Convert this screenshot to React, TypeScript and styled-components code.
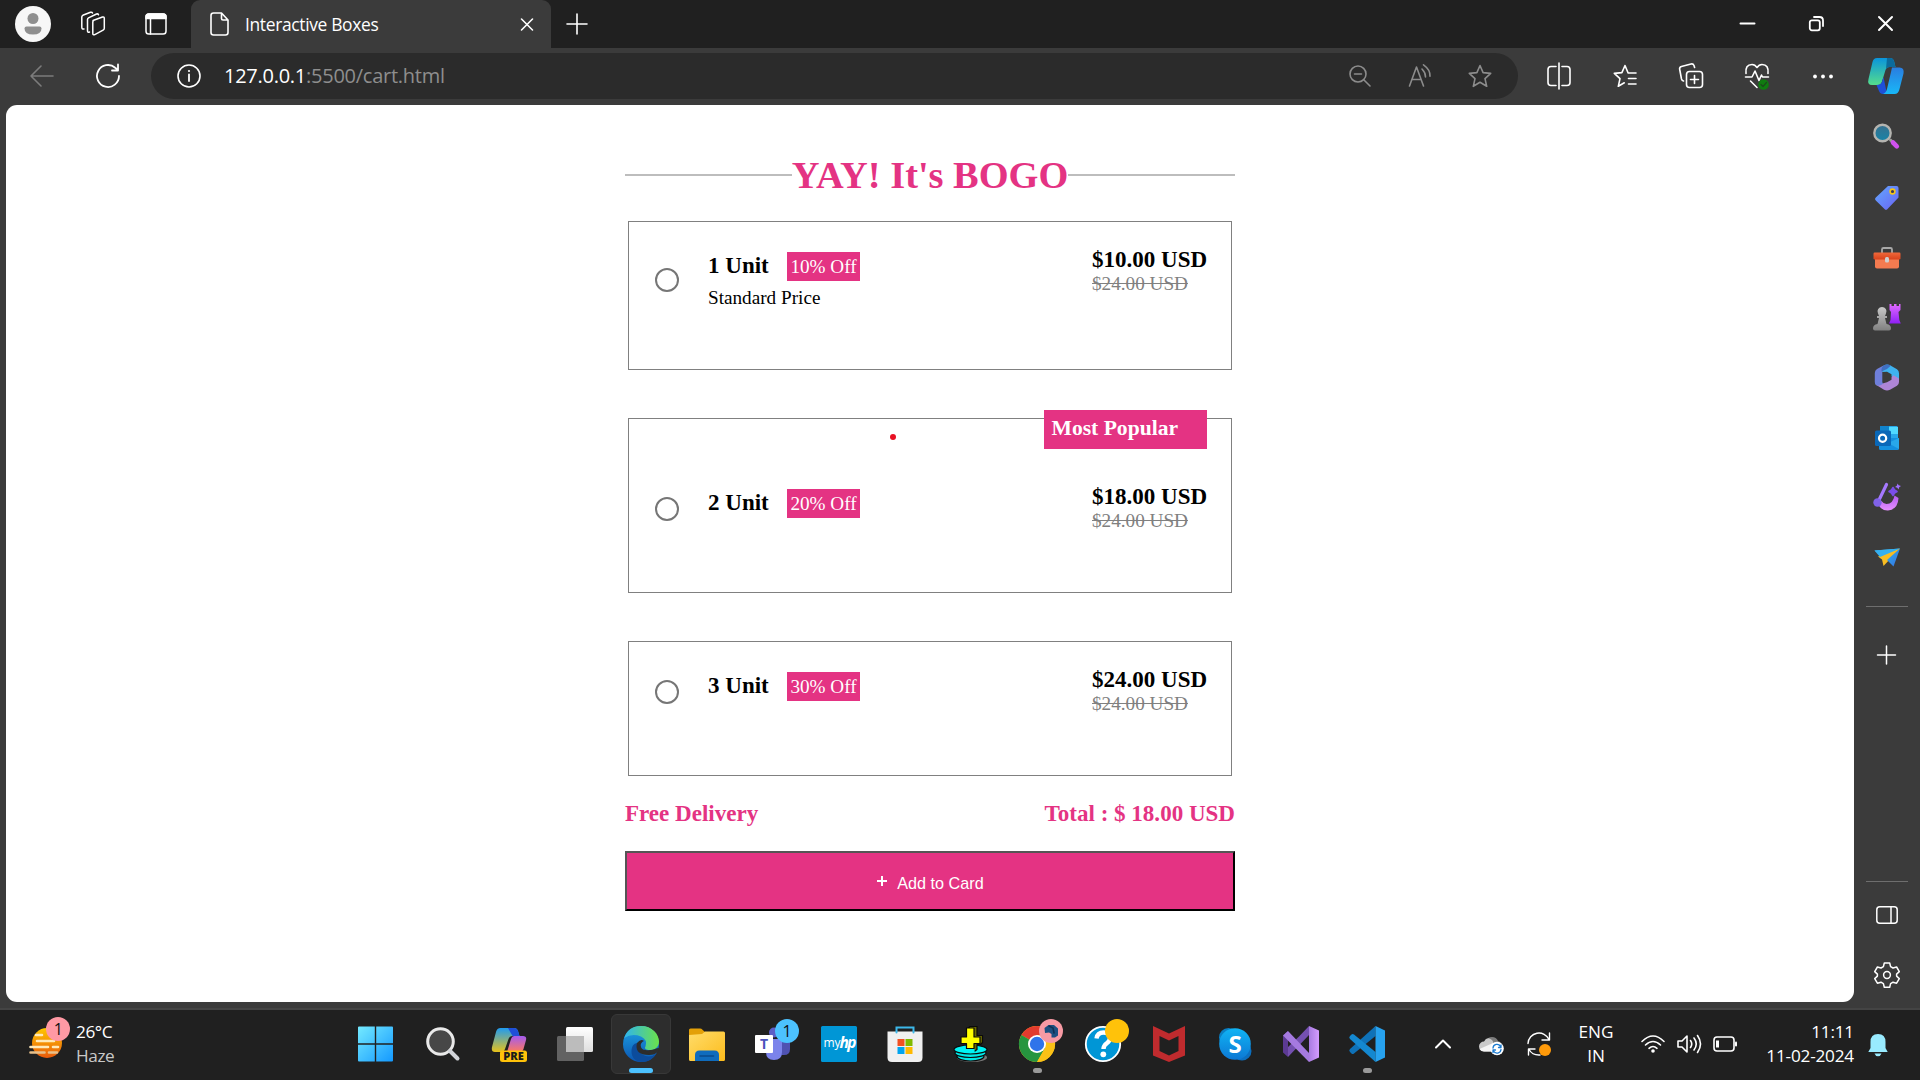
import React from "react";
import styled, { createGlobalStyle } from "styled-components";

const UI = `"Open Sans", "Noto Sans", sans-serif`;
const SERIF = `"Liberation Serif", "Times New Roman", serif`;
const PINK = "#e43383";

const GlobalStyle = createGlobalStyle`
  * { box-sizing: border-box; }
  body { margin: 0; background: #3b3b3b; overflow: hidden; }
`;

const Desktop = styled.div`
  width: 1920px;
  height: 1080px;
  display: flex;
  flex-direction: column;
  background: #3b3b3b;
  font-family: ${UI};
  color: #fff;
`;

/* ---------- shared ---------- */
const Slot = styled.div<{ $w: number; $h?: number; $lift?: number }>`
  position: relative;
  flex: none;
  width: ${(p) => p.$w}px;
  height: ${(p) => (p.$h ? `${p.$h}px` : "100%")};
  padding-bottom: ${(p) => p.$lift ?? 0}px;
  display: flex;
  align-items: center;
  justify-content: center;
`;

const Glyph = styled.svg`
  display: block;
  flex: none;
  overflow: visible;
  fill: none;
  stroke-linecap: round;
  stroke-linejoin: round;
`;

type IconProps = { w: number; h?: number; stroke?: string; sw?: number; children: React.ReactNode };
const Icon = ({ w, h = w, stroke = "none", sw = 1.6, children }: IconProps) => (
  <Glyph width={w} height={h} viewBox={`0 0 ${w} ${h}`} stroke={stroke} strokeWidth={sw}>
    {children}
  </Glyph>
);

/* ---------- title bar ---------- */
const TitleBar = styled.header`
  height: 48px;
  flex: none;
  display: flex;
  align-items: center;
  background: #202020;
`;
const Avatar = styled.div`
  width: 36px;
  height: 36px;
  border-radius: 50%;
  background: #f7f7f7;
  display: flex;
  align-items: center;
  justify-content: center;
`;
const Tab = styled.div`
  width: 360px;
  height: 48px;
  padding: 0 18px 0 19px;
  display: flex;
  align-items: center;
  border-radius: 9px 9px 0 0;
  background: #3b3b3b;
`;
const TabTitle = styled.span`
  margin: 0 auto 0 16px;
  font-size: 17.4px;
  line-height: 24px;
  letter-spacing: -0.33px;
  white-space: nowrap;
`;
const WindowControls = styled.div`
  display: flex;
  height: 48px;
  margin-left: auto;
`;

/* ---------- toolbar ---------- */
const Toolbar = styled.div`
  height: 57px;
  flex: none;
  display: flex;
  align-items: center;
  padding-bottom: 1px;
`;
const AddressBar = styled.div`
  width: 1367px;
  height: 46px;
  margin: 0 8px 0 19px;
  padding: 0 8px 0 26px;
  border-radius: 23px;
  background: #2b2b2b;
  display: flex;
  align-items: center;
`;
const Url = styled.span`
  margin: 0 auto 0 23px;
  font-size: 20px;
  line-height: 28px;
  letter-spacing: -0.26px;
  color: #8e8e8e;
  white-space: nowrap;
  b { font-weight: 400; color: #fff; }
`;

/* ---------- body ---------- */
const Body = styled.div`
  height: 905px;
  flex: none;
  display: flex;
  padding-left: 6px;
  border-bottom: 2px solid #444;
`;
const Page = styled.main`
  width: 1848px;
  height: 897px;
  border-radius: 11px;
  background: #fff;
  display: flex;
  justify-content: center;
  font-family: ${SERIF};
  color: #000;
`;
const Sidebar = styled.aside`
  width: 66px;
  padding: 2px 0 3px;
  display: flex;
  flex-direction: column;
  align-items: center;
`;
const SideRule = styled.div<{ $top: string; $bottom: number }>`
  width: 42px;
  height: 1px;
  flex: none;
  margin: ${(p) => p.$top} 0 ${(p) => p.$bottom}px;
  background: #6e6e6e;
`;

/* ---------- cart ---------- */
const Cart = styled.section`
  width: 610px;
  padding-top: 48px;
  display: flex;
  flex-direction: column;
`;
const HeadingRow = styled.div`
  height: 44px;
  display: flex;
  align-items: center;
  &::before, &::after { content: ""; flex: 1; height: 2px; background: #bdbdbd; }
`;
const Heading = styled.h1`
  margin: 0;
  font-size: 38.4px;
  line-height: 44px;
  color: ${PINK};
  white-space: nowrap;
`;
const Offer = styled.article<{ $h: number; $top: number; $pad: number }>`
  position: relative;
  height: ${(p) => p.$h}px;
  margin: ${(p) => p.$top}px 3px 0;
  padding: ${(p) => p.$pad}px 24px 0 26px;
  border: 1px solid #808080;
  display: flex;
  align-items: flex-start;
`;
const Radio = styled.span<{ $top: number }>`
  width: 24px;
  height: 24px;
  flex: none;
  margin: ${(p) => p.$top}px 29px 0 0;
  border: 2px solid #767676;
  border-radius: 50%;
`;
const Info = styled.div`
  padding-top: 5px;
`;
const UnitRow = styled.div`
  display: flex;
  align-items: flex-start;
  height: 29px;
`;
const Unit = styled.h3`
  margin: 0 18px 0 0;
  font-size: 23.04px;
  line-height: 27px;
  white-space: nowrap;
`;
const Discount = styled.span`
  height: 29px;
  padding: 0 3px 0 3.6px;
  line-height: 29px;
  font-size: 19.2px;
  color: #fff;
  background: ${PINK};
  white-space: nowrap;
`;
const Note = styled.p`
  margin: 6px 0 0;
  font-size: 19.2px;
  line-height: 22px;
`;
const Prices = styled.div`
  width: 115px;
  margin-left: auto;
  white-space: nowrap;
`;
const Price = styled.div`
  margin-bottom: 2px;
  font-size: 23.04px;
  font-weight: 700;
  line-height: 24px;
`;
const OldPrice = styled.del`
  display: block;
  font-size: 19.2px;
  line-height: 22px;
  color: #808080;
`;
const Popular = styled.div`
  position: absolute;
  top: -9px;
  right: 24px;
  width: 163px;
  height: 39px;
  padding-left: 7.5px;
  font-size: 21.6px;
  font-weight: 700;
  line-height: 37px;
  color: #fff;
  background: ${PINK};
`;
const LaserDot = styled.span`
  position: absolute;
  left: 261px;
  top: 15px;
  width: 6px;
  height: 6px;
  border-radius: 50%;
  background: #e81123;
`;
const Summary = styled.div`
  display: flex;
  justify-content: space-between;
  margin-top: 24px;
  font-size: 23.04px;
  font-weight: 700;
  line-height: 27px;
  color: ${PINK};
`;
const AddButton = styled.button`
  width: 610px;
  height: 60px;
  margin: 24px 0 0;
  padding: 4px 0 0;
  border: 2px solid;
  border-color: #555 #000 #000 #555;
  background: ${PINK};
  color: #fff;
  font: 16.2px "Liberation Sans", Arial, sans-serif;
  display: flex;
  align-items: center;
  justify-content: center;
  gap: 9px;
  svg { margin-bottom: 5px; }
`;

/* ---------- taskbar ---------- */
const Taskbar = styled.footer`
  position: relative;
  height: 70px;
  flex: none;
  display: flex;
  background: #202020;
`;
const Weather = styled.div`
  position: relative;
  width: 344px;
  padding: 10px 0 0 29px;
  display: flex;
  font-size: 17.2px;
  line-height: 24px;
  letter-spacing: -0.4px;
`;
const WeatherText = styled.div`
  margin-left: 11px;
  span { display: block; color: #c8c8c8; }
`;
const CountBadge = styled.span<{ $x: number; $y: number; $bg: string }>`
  position: absolute;
  left: ${(p) => p.$x}px;
  top: ${(p) => p.$y}px;
  width: 24px;
  height: 24px;
  border-radius: 50%;
  background: ${(p) => p.$bg};
  color: #111;
  font-size: 16px;
  line-height: 24px;
  text-align: center;
`;
const ActiveTile = styled.div`
  width: 60px;
  height: 60px;
  border: 1px solid #383838;
  border-radius: 6px;
  background: #2d2d2d;
  display: flex;
  align-items: center;
  justify-content: center;
`;
const Running = styled.span<{ $active?: boolean }>`
  position: absolute;
  bottom: 7px;
  width: ${(p) => (p.$active ? 24 : 9)}px;
  height: 5px;
  border-radius: 3px;
  background: ${(p) => (p.$active ? "#4cc2ff" : "#9a9a9a")};
`;
const Tray = styled.div`
  margin-left: auto;
  padding-right: 18px;
  display: flex;
`;
const TrayText = styled.div<{ $w: number; $align: string; $ls: number }>`
  width: ${(p) => p.$w}px;
  padding-top: 10px;
  text-align: ${(p) => p.$align};
  font-size: 17.2px;
  line-height: 24px;
  letter-spacing: ${(p) => p.$ls}px;
  white-space: nowrap;
`;

const HiddenDefs = styled.svg`
  position: absolute;
`;

const Gradients = () => (
  <HiddenDefs width="0" height="0">
    <defs>
      {[
        ["cpA", "#0a94dc", "#55dd8c", "0", "1"],
        ["cpB", "#2a7de0", "#18b8f8", "0", "1"],
        ["win", "#74eaff", "#1499ff", "1", "1"],
        ["preA", "#1f9bf0", "#e8c21a", "0", "1"],
        ["preB", "#a35bf0", "#ff7a5c", "0", "1"],
        ["tag", "#62a8ff", "#6a63f2", "1", "1"],
        ["box", "#f0683a", "#d8431c", "0", "1"],
        ["rook", "#e06bff", "#8f1ff5", "0", "1"],
        ["pawn", "#c8c8c8", "#808080", "0", "1"],
        ["lens", "#38708e", "#1784a8", "0", "1"],
        ["fold", "#ffdc6a", "#fcbc1c", "1", "1"],
        ["edgeA", "#1fa5e6", "#0b55b0", "0", "1"],
        ["edgeB", "#2fb4ee", "#6be24a", "1", "0"],
        ["sky", "#10b4f4", "#0c78d4", "0", "1"],
        ["sun", "#ffc800", "#e8590c", "0", "1"],
        ["vs", "#a87be0", "#d49cff", "1", "0"],
        ["design", "#b45cf0", "#e690ff", "0", "1"],
        ["plane", "#28b0f0", "#3a6ee0", "1", "1"],
        ["tv", "#ffffff", "#dedede", "0", "1"],
      ].map(([id, a, b, x, y]) => (
        <linearGradient key={id} id={id} x1="0" y1="0" x2={x} y2={y}>
          <stop offset="0" stopColor={a} />
          <stop offset="1" stopColor={b} />
        </linearGradient>
      ))}
    </defs>
  </HiddenDefs>
);

const sidebarIcons = [
  <Icon w={28}>
    <path d="M17.5 17l4 4" stroke="#9a9a9a" strokeWidth={3} />
    <path d="M20 19.500l3.800 3.800" stroke="#cf52ee" strokeWidth={4.600} />
    <circle cx={9.500} cy={10} r={8.200} fill="url(#lens)" stroke="#b4b4b0" strokeWidth={2.400} />
  </Icon>,
  <Icon w={26}>
    <path d="M14 2h8.500a2 2 0 0 1 2 2v9.500L13.500 25a2 2 0 0 1-3 0L1.800 16.500a2 2 0 0 1 0-3z" fill="url(#tag)" />
    <circle cx={18.500} cy={7.500} r={2.400} fill="#3d3a55" stroke="#f5c518" strokeWidth={1.600} />
  </Icon>,
  <Icon w={28} h={22}>
    <path d="M9 7V3.500a1.500 1.500 0 0 1 1.500-1.500h7A1.500 1.500 0 0 1 19 3.500V7" stroke="#a8a8a8" strokeWidth={1.800} />
    <rect x={2} y={8} width={24} height={14.500} rx={2} fill="#f47b50" />
    <rect x={0.500} y={6.500} width={27} height={7} rx={1.200} fill="url(#box)" />
    <rect x={12} y={11} width={4} height={5.500} rx={1.500} fill="#d0d0d0" />
  </Icon>,
  <Icon w={28}>
    <path d="M16.500 1h2v2h2.500V1h2.500v2H26V1h1.500v6l-2 2 .8 8 1.500 3.500H16l1.500-3.500L18 9l-1.500-2z" fill="url(#rook)" />
    <path d="M5 10.500a4.500 4.500 0 1 1 8 0l-1 2.500h2v2h-2l1.500 6c3 .5 4.500 2 4.500 4.500q0 2-2 2H2q-2 0-2-2c0-2.500 1.500-4 4.500-4.500L6 15H4v-2h2z" fill="url(#pawn)" />
  </Icon>,
  <Icon w={26} h={27}>
    <path d="M10 1.200q3-1.500 6 0l7 4q2 1.300 2 4V17l-7.500-4.500v-2.300L13 7.700 8 8z" fill="#3fb2ee" />
    <path d="M25 14.500V18q0 2.500-2 3.800l-7 4q-3 1.500-6 0L1.500 20.500q4 1 6-.8l5.500-1.400 4.500-2.500v-2.500l2-2z" fill="#ae85d6" />
    <path d="M8.300 8.500V18q0 1.500 1.500 1-4 4-8 2Q.8 20 .8 18V9q0-2.600 2.200-4l7-3.800q-2.200 3-1.700 7.300z" fill="#6f7fda" />
    <path d="M10 1.200q-3 2-2.500 6.300L13 5l4-3.500q-3.500-2-7-.3z" fill="#3f6fc0" />
  </Icon>,
  <Icon w={24} h={23}>
    <rect x={5} y={0} width={18} height={17} rx={1.500} fill="#28a8ea" />
    <path d="M5 0h9v8H5z" fill="#1183cc" />
    <path d="M14 1h9v7h-9z" fill="#50d9ff" />
    <path d="M4 12h20v10.500q0 1.500-1.500 1.500h-17Q4 24 4 22.500z" fill="#1490df" />
    <path d="M24 12v11L13 17z" fill="#28a8ea" />
    <rect x={0} y={4.500} width={16} height={15.500} rx={1.500} fill="#0a68b8" />
    <circle cx={7.600} cy={12.200} r={3.600} stroke="#fff" strokeWidth={2.200} />
  </Icon>,
  <Icon w={28}>
    <path d="M4.500 20q3.500 7.800 10.500 7.500 10-1 10.500-12.500l-4-2.500q-1.500 8.500-8 8.500-3 0-5-3z" fill="url(#design)" />
    <path d="M13.500 1.500L6.500 16" stroke="#a679ff" strokeWidth={3.200} />
    <circle cx={4.500} cy={19.500} r={4.200} fill="#8062e8" />
    <path d="M20 4.500l1.500 2.500 2.500 1.500-2.500 1.500-1.500 2.500-1.500-2.500L16 8.500 18.500 7z" fill="#7a4ee8" stroke="#7a4ee8" strokeWidth={1.600} />
    <path d="M24.500.5l1.200 1.800 2.300.7-1.800 1.200-.7 2.300-1.200-1.800-2.300-.7 1.800-1.200z" fill="#a070ff" />
  </Icon>,
  <Icon w={27} h={18}>
    <path d="M.5 2.500L26 .5 9.500 10.500z" fill="#3bb2ee" />
    <path d="M4 8.500L26 .5 9.500 18 8 11.500z" fill="#f8bd22" />
    <path d="M.5 2.500L26 .5 6 9z" fill="#35b0f0" />
    <path d="M26 .5L13 12l6.500 6.500z" fill="url(#plane)" />
  </Icon>,
];

const offers = [
  { unit: "1 Unit", off: "10% Off", note: "Standard Price", price: "$10.00 USD", h: 149, top: 24, pad: 25, radio: 21 },
  { unit: "2 Unit", off: "20% Off", price: "$18.00 USD", h: 175, top: 48, pad: 65, radio: 13, popular: true },
  { unit: "3 Unit", off: "30% Off", price: "$24.00 USD", h: 135, top: 48, pad: 25, radio: 13 },
];

const taskIcons = [
  <Icon w={38} h={36}>
    <path d="M0 1.500Q0 .5 1 .5h15.800v16.800H0zM18.200.5h15.800q1 0 1 1v15.800H18.200zM0 18.700h16.800v16.800H1q-1 0-1-1zM18.200 18.700H35v15.800q0 1-1 1H18.200z" fill="url(#win)" />
  </Icon>,
  <Icon w={34} h={34}>
    <circle cx={14.500} cy={14.500} r={12.800} fill="#474747" stroke="#e9e9e9" strokeWidth={3} />
    <path d="M24 24l7.500 7.500" stroke="#d2d5da" strokeWidth={4} />
  </Icon>,
  <Icon w={36} h={36}>
    <path d="M9.500 2H23q3 0 4 3l1.500 5h-7q-3 0-4 3L14 23q-1 3-4 3H4q-4 0-3-5L5 6q1-4 4.500-4z" fill="url(#preA)" />
    <path d="M17 2h6q3 0 4 3l1.500 5h-7z" fill="#1f4fd8" />
    <path d="M23 10h9q4 0 3 4l-2.500 9q-1 3-4 3H16l4-13q1-3 3-3z" fill="url(#preB)" />
    <rect x={9} y={24.500} width={27} height={11.500} rx={2.500} fill="#ffc20a" />
    <text x={22.500} y={34.400} textAnchor="middle" fontFamily={UI} fontSize={11} fontWeight={800} fill="#1b1b1b">PRE</text>
  </Icon>,
  <Icon w={36} h={34}>
    <rect x={9} y={0} width={27} height={25} rx={1.500} fill="url(#tv)" />
    <rect x={0} y={9} width={27} height={25} rx={1.500} fill="#6e6e6e" fillOpacity={0.85} />
    <path d="M9 9h18v16H9z" fill="#bcbcbc" />
  </Icon>,
  <Icon w={36}>
    <circle cx={18} cy={18} r={18} fill="url(#edgeA)" />
    <path d="M1.200 12Q5 0 18 0c11 0 18 8 18 15.500 0 6-4.500 8.500-9 8.500-4 0-6-1.500-4.500-3.500Q25 14 18 10.500 9 7 1.200 12z" fill="url(#edgeB)" />
    <path d="M14 17q-1 10 8.500 13 6 1.500 11-2.500Q28.500 36 19 36 8 35 8.500 24 9 18 14 17z" fill="#0c4c9c" />
    <path d="M22.500 24q-4.500-.2-4.800-4.500 0-3 3.300-4.500-3-2.500-7 2-3 12 12 12 6 0 9-3.500l1-1.200q1.500-3-2-2-5.500 2.500-11.500 1.700z" fill="#2d2d2d" />
  </Icon>,
  <Icon w={36} h={33}>
    <path d="M0 2Q0 .5 1.500.5H11q1.500 0 2.500 1.200L16 4v6H0z" fill="#e3a008" />
    <path d="M0 7l13-1 3-2.500h18.500Q36 3.500 36 5v26.500q0 1.500-1.500 1.500h-33Q0 33 0 31.500z" fill="url(#fold)" />
    <path d="M6 33v-6q0-4.500 4.500-4.500h15Q30 22.500 30 27v6z" fill="#0f6cbd" />
    <path d="M11 28h13.500" stroke="#0a4a8a" strokeWidth={1.600} />
  </Icon>,
  <Icon w={36}>
    <circle cx={19} cy={6.500} r={5} fill="#5b5fc7" />
    <path d="M26 11h9v12q0 6-6 6h-3z" fill="#4f52b2" />
    <path d="M12 13h15v13q0 8-8 8t-8-8z" fill="#7b83eb" />
    <rect x={0} y={9} width={18} height={18} rx={1} fill="#fff" />
    <text x={9} y={23} textAnchor="middle" fontFamily={UI} fontSize={14} fontWeight={700} fill="#4b53bc">T</text>
  </Icon>,
  <Icon w={36}>
    <rect width={36} height={36} rx={1.500} fill="#0096d6" />
    <text x={2.500} y={21} fontFamily={UI} fontSize={12} fill="#fff">my</text>
    <text x={18.500} y={21.500} fontFamily={UI} fontSize={15.500} fontWeight={700} fontStyle="italic" letterSpacing={-1.500} fill="#fff">hp</text>
  </Icon>,
  <Icon w={36}>
    <path d="M.5 5.500h35v26Q35.500 36 31 36H5Q.5 36 .5 31.500z" fill="#f0f0f0" />
    <path d="M9.500 6.500v-5h17v5" stroke="#3cb8ea" strokeWidth={2} strokeLinejoin="miter" />
    <path d="M10.500 13h7v7h-7z" fill="#f25022" />
    <path d="M18.500 13h7v7h-7z" fill="#7fba00" />
    <path d="M10.500 21h7v7h-7z" fill="#00a4ef" />
    <path d="M18.500 21h7v7h-7z" fill="#ffb900" />
  </Icon>,
  <Icon w={36}>
    <g stroke="#0a0a0a" strokeWidth={1.200}>
      <ellipse cx={19} cy={31.500} rx={15} ry={4.500} fill="#777" stroke="none" />
      <ellipse cx={17.500} cy={30.500} rx={13.500} ry={4.500} fill="#00e8e8" />
      <ellipse cx={17.500} cy={27} rx={15.500} ry={4.500} fill="#00e8e8" />
      <ellipse cx={17.500} cy={23.500} rx={16.500} ry={4.500} fill="#00f4f4" />
      <path d="M15 2.500L17 .5h7v9h5.500v7l-2 2H24v5l-2 1.500" fill="#6b6b00" />
      <path d="M13.500 2h7.500v9h6v6.500h-6v5h-7.500v-5H8V11h5.500z" fill="#ffff00" />
    </g>
  </Icon>,
  <Icon w={36}>
    <circle cx={18} cy={18} r={18} fill="#fbc116" />
    <path d="M18 18L2.400 9A18 18 0 0 1 33.600 9z" fill="#e33b2e" />
    <path d="M18 18L2.400 9A18 18 0 0 0 18 36l8-14z" fill="#26953f" />
    <path d="M18 9h15.600A18 18 0 0 1 18 36l8-14z" fill="#fbc116" />
    <circle cx={18} cy={18} r={9} fill="#fff" />
    <circle cx={18} cy={18} r={7.200} fill="#2f74ea" />
    <circle cx={32} cy={5} r={12} fill="#f79aa4" />
    <path d="M25.500 2l4-3h5.500l4 3.500v7l-3 2h-3.500V8l-2.500-1.500-4 .5z" fill="#1c4f80" />
    <path d="M30 0l4 2 1 5" stroke="#0f2f52" />
  </Icon>,
  <Icon w={36}>
    <circle cx={18} cy={18} r={17.200} fill="#0096d6" stroke="#fff" strokeWidth={1.800} />
    <path d="M11.500 12.500q1-6 7-6 6.500 0 6.500 5.500 0 3-3.200 5.200Q18.500 19.500 18.500 23" stroke="#fff" strokeWidth={4.400} strokeLinecap="butt" />
    <circle cx={18.300} cy={28.300} r={2.900} fill="#fff" />
    <circle cx={32} cy={5} r={12} fill="#ffc20a" />
  </Icon>,
  <Icon w={32} h={36}>
    <path fillRule="evenodd" d="M0 0l16 7.500L32 0v29.500L16 36 0 29.500zM6.500 10v15l9.500 4.500 9.500-4.500V10L16 14.500z" fill="#c02b2e" />
  </Icon>,
  <Icon w={34} h={34}>
    <circle cx={10.500} cy={10.500} r={9.500} fill="#0a7fc4" />
    <circle cx={24} cy={24} r={9.500} fill="#0b6fc0" />
    <circle cx={17} cy={17} r={15.800} fill="url(#sky)" />
    <text x={17} y={25.500} textAnchor="middle" fontFamily={UI} fontSize={24} fontWeight={700} fill="#fff">S</text>
  </Icon>,
  <Icon w={36}>
    <path d="M0 9.500L5 5v26l-5-4.500z" fill="#5c3a94" />
    <path d="M5 31l21-22V0L16 10.500 5 21z" fill="#7450b0" />
    <path d="M5 5L26 27v9L0 9.500z" fill="#a57ae0" />
    <path d="M26 0l10 4.500v27L26 36z" fill="url(#vs)" />
  </Icon>,
  <Icon w={36}>
    <path d="M26.500 0L1 23q-1.500 1.500 0 3l1.500 1.500q1 1 2.500 0L26.500 10z" fill="#0f72b8" />
    <path d="M26.500 36L1 13q-1.500-1.500 0-3l1.500-1.500q1-1 2.500 0L26.500 26z" fill="#1488d0" />
    <path d="M26.500 0L36 4.500v27L26.500 36z" fill="#27a2ef" />
  </Icon>,
];

const OfferCard = ({ o }: { o: (typeof offers)[number] }) => (
  <Offer $h={o.h} $top={o.top} $pad={o.pad}>
    <Radio $top={o.radio} />
    <Info>
      <UnitRow>
        <Unit>{o.unit}</Unit>
        <Discount>{o.off}</Discount>
      </UnitRow>
      {o.note && <Note>{o.note}</Note>}
    </Info>
    <Prices>
      <Price>{o.price}</Price>
      <OldPrice>$24.00 USD</OldPrice>
    </Prices>
    {o.popular && <Popular>Most Popular</Popular>}
    {o.popular && <LaserDot />}
  </Offer>
);

const star = "M12 1.500l3.100 7.100 7.600.8-5.700 5.200 1.700 7.700L12 18.300l-6.700 4 1.700-7.700L1.300 9.400l7.600-.8z";

export default function App() {
  return (
    <Desktop>
      <GlobalStyle />
      <Gradients />
      <TitleBar>
        <Slot $w={66}>
          <Avatar>
            <Icon w={18} h={24}>
              <circle cx={9} cy={6.500} r={5.500} fill="#8f8f8f" />
              <path d="M2.500 14.500h13q2 0 2 2 0 6-8.500 6t-8.500-6q0-2 2-2z" fill="#8f8f8f" />
            </Icon>
          </Avatar>
        </Slot>
        <Slot $w={54}>
          <Icon w={24} stroke="#fff" sw={1.500}>
            <path d="M12 8.500l9.500-3.500q1.800-.5 1.800 1.300v10q0 1.200-1.200 1.800l-8.300 4.500q-2 .8-2-1.200V10q0-1 .8-1.500z" />
            <path d="M8.500 20q-2 .8-2-1.200V7.500q0-1.200 1-1.700L15.500 2q1.500-.5 2 .8" />
            <path d="M3 17q-2.200.5-2.200-1.700V5q0-1.200 1-1.700L9.500.3q1.500-.5 2 .8" />
          </Icon>
        </Slot>
        <Slot $w={71}>
          <Icon w={22} stroke="#fff" sw={1.500}>
            <rect x={1} y={1} width={20} height={20} rx={2.800} />
            <path d="M1 5.500V4q0-3 3-3h14q3 0 3 3v1.500zM5.500 6v15" fill="#fff" />
          </Icon>
        </Slot>
        <Tab>
          <Icon w={19} h={24} stroke="#fff">
            <path d="M1 3.500Q1 1 3.500 1h8l6.500 7v12.500q0 2.500-2.500 2.500h-12Q1 23 1 20.500zM11.500 1v5.500Q11.500 8 13 8h5" />
          </Icon>
          <TabTitle>Interactive Boxes</TabTitle>
          <Icon w={12} stroke="#fff"><path d="M.5 1l11 11M11.500 1l-11 11" /></Icon>
        </Tab>
        <Slot $w={51} $lift={1}>
          <Icon w={20} stroke="#fff"><path d="M10 0v20M0 10h20" /></Icon>
        </Slot>
        <WindowControls>
          <Slot $w={69} $lift={1}><Icon w={15} stroke="#fff" sw={2}><path d="M.5 7.500h14" /></Icon></Slot>
          <Slot $w={69} $lift={1}>
            <Icon w={15} stroke="#fff" sw={1.800}>
              <rect x={.8} y={4.300} width={10} height={10} rx={2} />
              <path d="M5 1h5.500Q14 1 14 4.500V10" />
            </Icon>
          </Slot>
          <Slot $w={69} $lift={1}><Icon w={15} stroke="#fff" sw={2}><path d="M1 1l13 13M14 1L1 14" /></Icon></Slot>
        </WindowControls>
      </TitleBar>

      <Toolbar>
        <Slot $w={84}>
          <Icon w={24} h={22} stroke="#7c7c7c"><path d="M11 1L1 11l10 10M1 11h22" /></Icon>
        </Slot>
        <Slot $w={48}>
          <Icon w={24} stroke="#fff" sw={1.800}><path d="M23 12a11 11 0 1 1-3.800-8.300L22 6M22 .5V6.500h-6" /></Icon>
        </Slot>
        <AddressBar>
          <Icon w={24} stroke="#fff">
            <circle cx={12} cy={12} r={11} />
            <path d="M12 10.500v6.500" strokeWidth={1.800} />
            <circle cx={12} cy={7} r={1.100} fill="#fff" stroke="none" />
          </Icon>
          <Url><b>127.0.0.1</b>:5500/cart.html</Url>
          <Slot $w={60}>
            <Icon w={22} stroke="#8c8c8c">
              <circle cx={9} cy={9} r={8} /><path d="M5.500 9h7M15 15l6 6" />
            </Icon>
          </Slot>
          <Slot $w={60}>
            <Icon w={24} stroke="#8c8c8c">
              <path d="M1.500 22L8.500 3l7 19M4 15.500h9M14 5q3.500 3.500 3.500 8M15.500 .8q7 5 6.500 11.500" />
            </Icon>
          </Slot>
          <Slot $w={60}><Icon w={24} stroke="#8c8c8c"><path d={star} /></Icon></Slot>
        </AddressBar>
        <Slot $w={66}>
          <Icon w={24} h={26} stroke="#fff">
            <path d="M9 3.500H4Q1 3.500 1 6.500v13q0 3 3 3h5M15 3.500h5q3 0 3 3v13q0 3-3 3h-5M12 0v26" />
          </Icon>
        </Slot>
        <Slot $w={66}>
          <Icon w={24} stroke="#fff">
            <path d="M15 8.800L12 1.500 8.900 8.600l-7.600.8L7 14.600l-1.700 7.700 6-3.500M15.500 9H23M15.500 14.500H23M15.500 20H23" />
          </Icon>
        </Slot>
        <Slot $w={66}>
          <Icon w={24} h={26} stroke="#fff">
            <rect x={7.500} y={8.500} width={16} height={16} rx={3} />
            <path d="M15.500 12.500v8M11.500 16.500h8M4.500 18q-1.500-.3-2-2L.7 6.500q-.5-2.300 1.700-3L12 1q2.200-.5 3 1.500l.6 2" />
          </Icon>
        </Slot>
        <Slot $w={66}>
          <Icon w={24} h={26} stroke="#fff">
            <path d="M1 10.500Q0 1.500 7 1.500q3 0 5 3 2-3 5-3 7 0 6 9M.5 14h6.500l3-6 4 9.500 2.500-5.500 1 2h6M5.500 18l6.500 6.500" />
            <circle cx={18.500} cy={21.500} r={5.300} fill="#107c10" stroke="none" />
            <path d="M16 21.500l2 2 3.500-4" stroke="#1c4a1c" strokeWidth={1.200} />
          </Icon>
        </Slot>
        <Slot $w={66}>
          <Icon w={20} h={4}>
            {[2, 10, 18].map((x) => <circle key={x} cx={x} cy={2.500} r={1.900} fill="#fff" />)}
          </Icon>
        </Slot>
        <Slot $w={60}>
          <Icon w={36}>
            <path d="M9 0h13q3 0 4 3l1.500 6h-6q-3 0-4 3L14 23.500q-1 3.500-4 3.500H4q-5 0-3.500-6L4.500 4Q5.500 0 9 0z" fill="url(#cpA)" />
            <path d="M19 0h3q3 0 4 3l1.500 6h-6q-2 0-3.500 2z" fill="#0b6a9c" />
            <path d="M8.500 27q4 0 5.500-3l1.500-5 3.500 17h-4q-3 0-4-3z" fill="#1e50d8" />
            <path d="M24 9.500h7.500q5 0 4 6l-4 15.500q-1 5-5 5H15q3-1 4-5l4-17z" fill="url(#cpB)" />
          </Icon>
        </Slot>
      </Toolbar>

      <Body>
        <Page>
          <Cart>
            <HeadingRow><Heading>YAY! It's BOGO</Heading></HeadingRow>
            {offers.map((o) => <OfferCard key={o.unit} o={o} />)}
            <Summary><span>Free Delivery</span><span>Total : $ 18.00 USD</span></Summary>
            <AddButton>
              <Icon w={12} stroke="#fff" sw={2}><path d="M6 1v10M1 6h10" strokeLinecap="butt" /></Icon>
              Add to Card
            </AddButton>
          </Cart>
        </Page>
        <Sidebar>
          {sidebarIcons.map((icon, i) => <Slot key={i} $w={66} $h={60}>{icon}</Slot>)}
          <SideRule $top="19px" $bottom={18} />
          <Slot $w={66} $h={60}><Icon w={18} stroke="#fff" sw={1.500}><path d="M8.500 0v18M-.5 9h18" /></Icon></Slot>
          <SideRule $top="auto" $bottom={3} />
          <Slot $w={66} $h={60}>
            <Icon w={22} h={18} stroke="#fff" sw={1.500}>
              <rect x={.8} y={.8} width={20.400} height={16.400} rx={3} /><path d="M15 1v16" />
            </Icon>
          </Slot>
          <Slot $w={66} $h={60}>
            <Icon w={26} stroke="#fff" sw={1.500}>
              <circle cx={13} cy={13} r={3.400} />
              <path d="M10.300 1h5.400l.9 3.600 2.400 1.400 3.600-1 2.700 4.600-2.700 2.500v2l2.700 2.500-2.700 4.600-3.600-1-2.400 1.400-.9 3.600h-5.400l-.9-3.600L7 20.200l-3.600 1L.700 16.600l2.700-2.500v-2L.700 9.600 3.400 5l3.600 1 2.400-1.400z" />
            </Icon>
          </Slot>
        </Sidebar>
      </Body>

      <Taskbar>
        <Weather>
          <Icon w={36} h={50}>
            <circle cx={18} cy={23} r={15} fill="url(#sun)" />
            <path d="M7 15h6M8 21h17M1.500 27H19M24 27h5" stroke="#ffe9b8" strokeWidth={2.600} />
            <path d="M1.500 32.500h14M20 32.500h8" stroke="#e8c08a" strokeWidth={2.600} />
          </Icon>
          <CountBadge $x={46} $y={7} $bg="#ff99a4">1</CountBadge>
          <WeatherText>26°C<span>Haze</span></WeatherText>
        </Weather>
        {taskIcons.map((icon, i) => (
          <Slot key={i} $w={66} $lift={2}>
            {i === 4 ? <ActiveTile>{icon}</ActiveTile> : icon}
            {i === 6 && <CountBadge $x={35} $y={9} $bg="#4cc2ff">1</CountBadge>}
            {i === 4 && <Running $active />}
            {(i === 10 || i === 15) && <Running />}
          </Slot>
        ))}
        <Tray>
          <Slot $w={48} $lift={2}><Icon w={16} h={10} stroke="#fff" sw={2}><path d="M1 8.500l7-7 7 7" /></Icon></Slot>
          <Slot $w={48}>
            <Icon w={24} h={16}>
              <path d="M7 4a6.500 6.500 0 0 1 12 0q4 1 4 6l-8 3z" fill="#7d7d7d" />
              <path d="M5 14.500a5 5 0 0 1 0-10Q8-1 13 3q1.500 1.500 1.500 3.500L20 8v6.500z" fill="#c9c9c9" />
              <path d="M5 14.500q-3 0-4.500-2.500L14 6l3 8.500z" fill="#f4f4f4" />
              <circle cx={18} cy={11.500} r={6.800} fill="#fff" />
              <path d="M14 11a4 4 0 0 1 7.500-1.500M22 8v2.500h-2.500M22 12.500a4 4 0 0 1-7.500 1.500M14 15.500V13h2.500" stroke="#1a7ad0" strokeWidth={1.300} />
            </Icon>
          </Slot>
          <Slot $w={48} $lift={2}>
            <Icon w={24} stroke="#fff" sw={1.400}>
              <path d="M1 11.500a11 11 0 0 1 21-4M22.500 1v7H15M1.500 23v-6H8M2 17.500q3.500 6 11 5.500" />
              <circle cx={18} cy={18} r={6} fill="#ff9a0a" stroke="none" />
            </Icon>
          </Slot>
          <TrayText $w={66} $align="center" $ls={0}>ENG<br />IN</TrayText>
          <Slot $w={48} $lift={2}>
            <Icon w={24} h={18} stroke="#fff">
              <path d="M1 6.500q11-11 22 0M4.500 10q7.500-7 15 0M8 13.300q4-3.600 8 0" />
              <circle cx={12} cy={16} r={1.800} fill="#fff" stroke="none" />
            </Icon>
          </Slot>
          <Slot $w={24} $lift={2}>
            <Icon w={24} h={20} stroke="#fff">
              <path d="M1 7h4l5-5v16l-5-5H1zM13.500 6.500q2.500 3.500 0 7M17 4q4.500 6 0 12M20.500 1.500q6 8.500 0 17" />
            </Icon>
          </Slot>
          <Slot $w={48} $lift={2}>
            <Icon w={24} h={16} stroke="#fff">
              <rect x={1} y={1} width={20} height={14} rx={3} />
              <path d="M4.500 4.500v7" strokeWidth={3} strokeLinecap="butt" />
              <path d="M23 6.500v3" strokeWidth={2} />
            </Icon>
          </Slot>
          <TrayText $w={105} $align="right" $ls={-0.2}>11:11<br />11-02-2024</TrayText>
          <Slot $w={48}>
            <Icon w={20} h={24}>
              <path d="M10 1q7.500 0 7.500 8v6l2.200 4H.3l2.200-4V9Q2.500 1 10 1z" fill="#99ebff" />
              <path d="M6.500 20.500h7q-1 2.800-3.500 2.800t-3.500-2.800z" fill="#99ebff" />
            </Icon>
          </Slot>
        </Tray>
      </Taskbar>
    </Desktop>
  );
}
